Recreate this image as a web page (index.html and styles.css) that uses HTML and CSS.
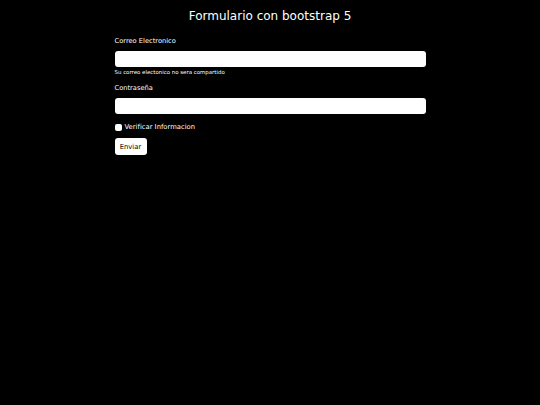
FILE: index.html
```html
<!DOCTYPE html>
<html lang="es">
<head>
<meta charset="utf-8">
<title>Formulario</title>
<link rel="stylesheet" href="styles.css">
</head>
<body>
<h1 class="title">Formulario con bootstrap 5</h1>
<form class="form">
  <div class="field">
    <label class="label" for="email">Correo Electronico</label>
    <input class="input" id="email" type="email">
    <div class="hint">Su correo electonico no sera compartido</div>
  </div>
  <div class="field">
    <label class="label" for="pass">Contraseña</label>
    <input class="input" id="pass" type="password">
  </div>
  <div class="check">
    <span class="box"></span>
    <span class="check-label">Verificar Informacion</span>
  </div>
  <button class="btn" type="button">Enviar</button>
</form>
</body>
</html>
```
FILE: styles.css
```css
html, body {
  margin: 0;
  padding: 0;
  background: #000;
  color: #fff;
  font-family: "DejaVu Sans", sans-serif;
  -webkit-font-smoothing: antialiased;
}
body {
  width: 540px;
  height: 405px;
}
.title {
  margin: 0;
  padding-top: 9px;
  font-size: 12px;
  font-weight: normal;
  text-align: center;
  line-height: 15px;
}
.form {
  width: 311px;
  margin: 0 auto;
  padding-top: 13px;
  display: flex;
  flex-direction: column;
}
.field {
  display: flex;
  flex-direction: column;
  margin-bottom: 8px;
}
.label {
  font-size: 6.7px;
  line-height: 9px;
  margin-bottom: 5px;
}
.input {
  box-sizing: border-box;
  height: 16px;
  width: 100%;
  border: none;
  border-radius: 3px;
  background: #fff;
  margin: 0;
  padding: 0;
}
.hint {
  font-size: 5.45px;
  line-height: 7px;
  margin-top: 2px;
}
.check {
  display: flex;
  align-items: center;
  gap: 3px;
  margin-top: 1px;
}
.box {
  width: 7px;
  height: 7px;
  background: #fff;
  border-radius: 2px;
}
.check-label {
  font-size: 6.8px;
  line-height: 9px;
}
.btn {
  align-self: flex-start;
  margin-top: 6px;
  width: 32px;
  height: 17px;
  border: none;
  border-radius: 3px;
  background: #fff;
  color: #000;
  font-family: "DejaVu Sans", sans-serif;
  font-size: 6.8px;
  padding: 0;
}
```
